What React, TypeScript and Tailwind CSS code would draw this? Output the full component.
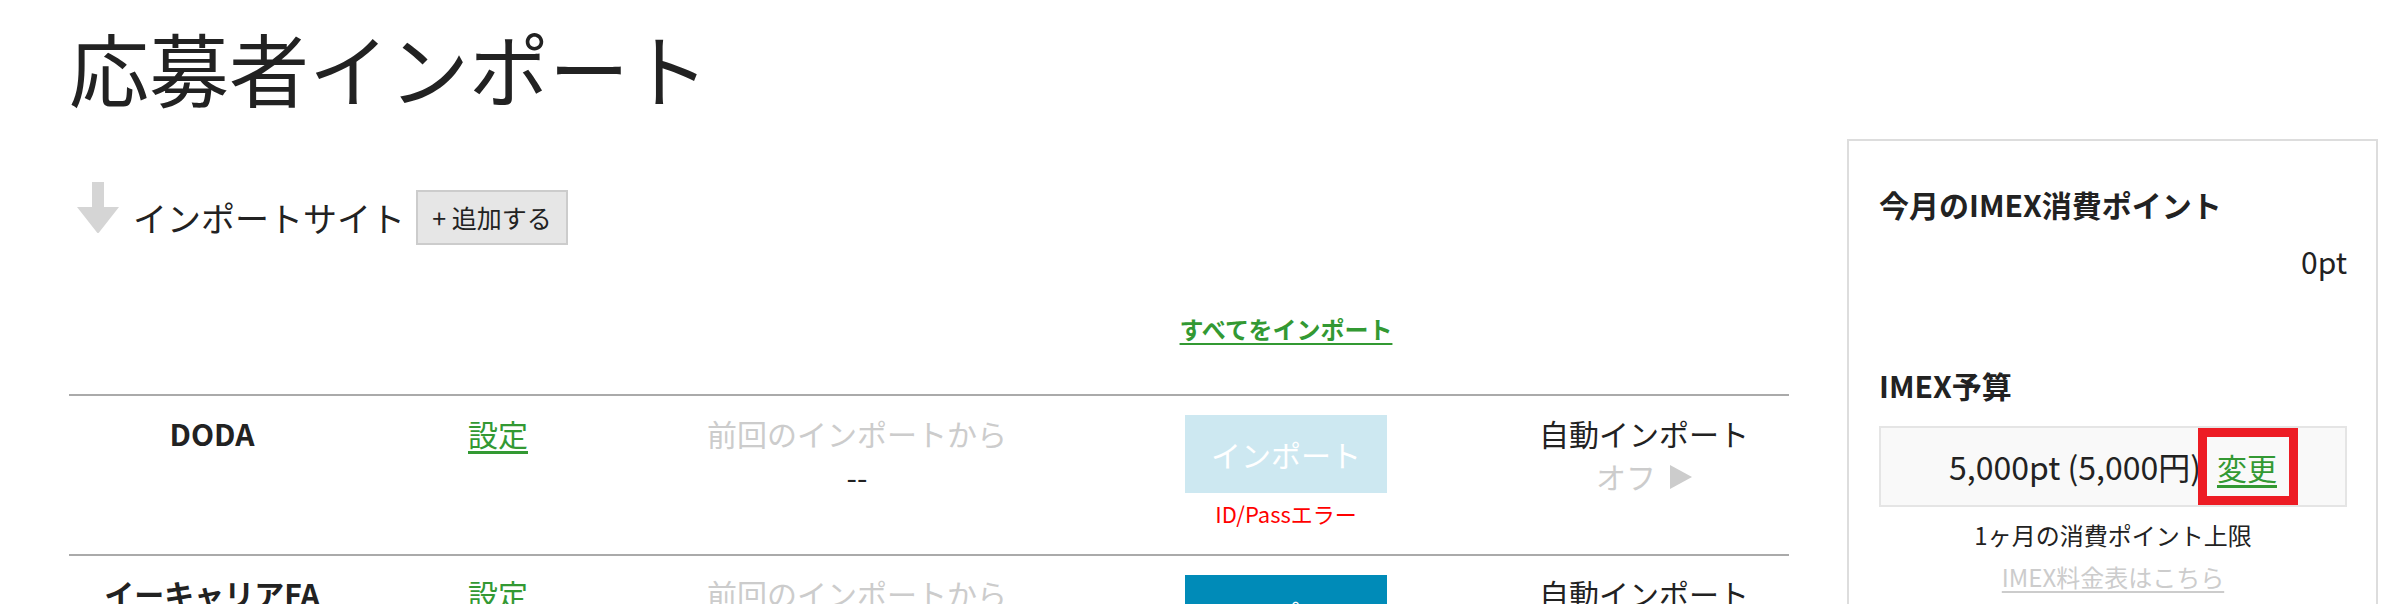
import { Fragment } from 'react';

type Site = {
  name: string;
  active: boolean;
  error?: string;
};

const SITES: Site[] = [
  { name: 'DODA', active: false, error: 'ID/Passエラー' },
  { name: 'イーキャリアFA', active: true },
];

const cols = 'grid grid-cols-[286px_286px_432px_426px_290px]';

function DownArrow() {
  return (
    <svg width="42" height="51" viewBox="0 0 42 51" className="-mt-[21px] ml-[8px] shrink-0">
      <path d="M15 0H27V25H42L22 50.5Q21 51.5 20 50.5L0 25H15Z" fill="#d5d5d5" />
    </svg>
  );
}

function Triangle() {
  return (
    <svg width="22" height="24" viewBox="0 0 22 24" className="inline-block">
      <path d="M0 0L22 12L0 24Z" fill="#cccccc" />
    </svg>
  );
}

function SiteRow({ site }: { site: Site }) {
  return (
    <div className={`${cols} h-[160px] border-t-2 border-[#aaaaaa] text-[30px] leading-[43px]`}>
      <div className="pt-[16px] text-center font-bold text-[#222]">{site.name}</div>
      <div className="pt-[16px] text-center">
        <a href="#" className="text-[#339933] underline underline-offset-[5px]">設定</a>
      </div>
      <div className="pt-[16px] text-center">
        <div className="text-[#cccccc]">前回のインポートから</div>
        <div className="text-[#222]">--</div>
      </div>
      <div className="flex flex-col items-center pt-[19px]">
        <button
          className={`h-[78px] w-[202px] text-[30px] text-white ${site.active ? 'bg-[#008bb8]' : 'bg-[#cde8f1]'}`}
        >
          インポート
        </button>
        {site.error && <div className="mt-[4px] text-[22px] leading-[33px] text-[#ff0000]">{site.error}</div>}
      </div>
      <div className="pt-[16px] text-center">
        <div className="text-[#222]">自動インポート</div>
        <div className="flex items-center justify-center gap-[14px] text-[#cccccc]">
          <span>オフ</span>
          <Triangle />
        </div>
      </div>
    </div>
  );
}

export default function App() {
  return (
    <div className="min-h-[604px] bg-white font-['Noto_Sans_CJK_JP',sans-serif] text-[#222]">
      <h1 className="pl-[69px] pt-[26px] text-[80px] font-normal leading-none">応募者インポート</h1>

      <div className="mt-[33px] flex gap-[58px] pl-[69px] pr-[18px]">
        <main className="w-[1720px] shrink-0">
          <div className="mt-[51px] flex items-center">
            <DownArrow />
            <span className="ml-[14px] text-[34px] leading-[45px]">インポートサイト</span>
            <button className="ml-[11px] h-[55px] w-[152px] border-2 border-[#cccccc] bg-[#e6e6e6] text-[25px] leading-none text-[#222]">
              +&nbsp;追加する
            </button>
          </div>

          <div className={`${cols} mt-[66px] mb-[47px]`}>
            <div />
            <div />
            <div />
            <div className="text-center">
              <a href="#" className="text-[24px] font-bold leading-[36px] text-[#339933] underline underline-offset-[4px]">
                すべてをインポート
              </a>
            </div>
            <div />
          </div>

          {SITES.map((site) => (
            <Fragment key={site.name}>
              <SiteRow site={site} />
            </Fragment>
          ))}
        </main>

        <aside className="w-[531px] shrink-0 border-2 border-[#dddddd] pb-[60px] pl-[30px] pr-[29px] pt-[41px]">
          <h2 className="text-[30px] font-bold leading-[45px]">今月のIMEX消費ポイント</h2>
          <p className="mt-[12px] text-right text-[30px] leading-[45px]">0pt</p>

          <h2 className="mt-[79px] text-[30px] font-bold leading-[45px]">IMEX予算</h2>
          <div className="mt-[18px] flex h-[81px] items-center justify-center border-2 border-[#e5e5e5] bg-[#f9f9f9] text-[32px] leading-[45px]">
            <span>5,000pt (5,000円)</span>
            <span className="relative ml-[16px]">
              <a href="#" className="text-[30px] text-[#339933] underline underline-offset-[5px]">変更</a>
              <span className="absolute -left-[19px] -right-[21px] -top-[16px] -bottom-[15px] border-[9px] border-[#ed1c24]" />
            </span>
          </div>
          <p className="mt-[10px] text-center text-[24px] leading-[36px]">1ヶ月の消費ポイント上限</p>
          <p className="mt-[6px] text-center text-[24px] leading-[36px]">
            <a href="#" className="text-[#cccccc] underline underline-offset-[4px]">IMEX料金表はこちら</a>
          </p>
        </aside>
      </div>
    </div>
  );
}
